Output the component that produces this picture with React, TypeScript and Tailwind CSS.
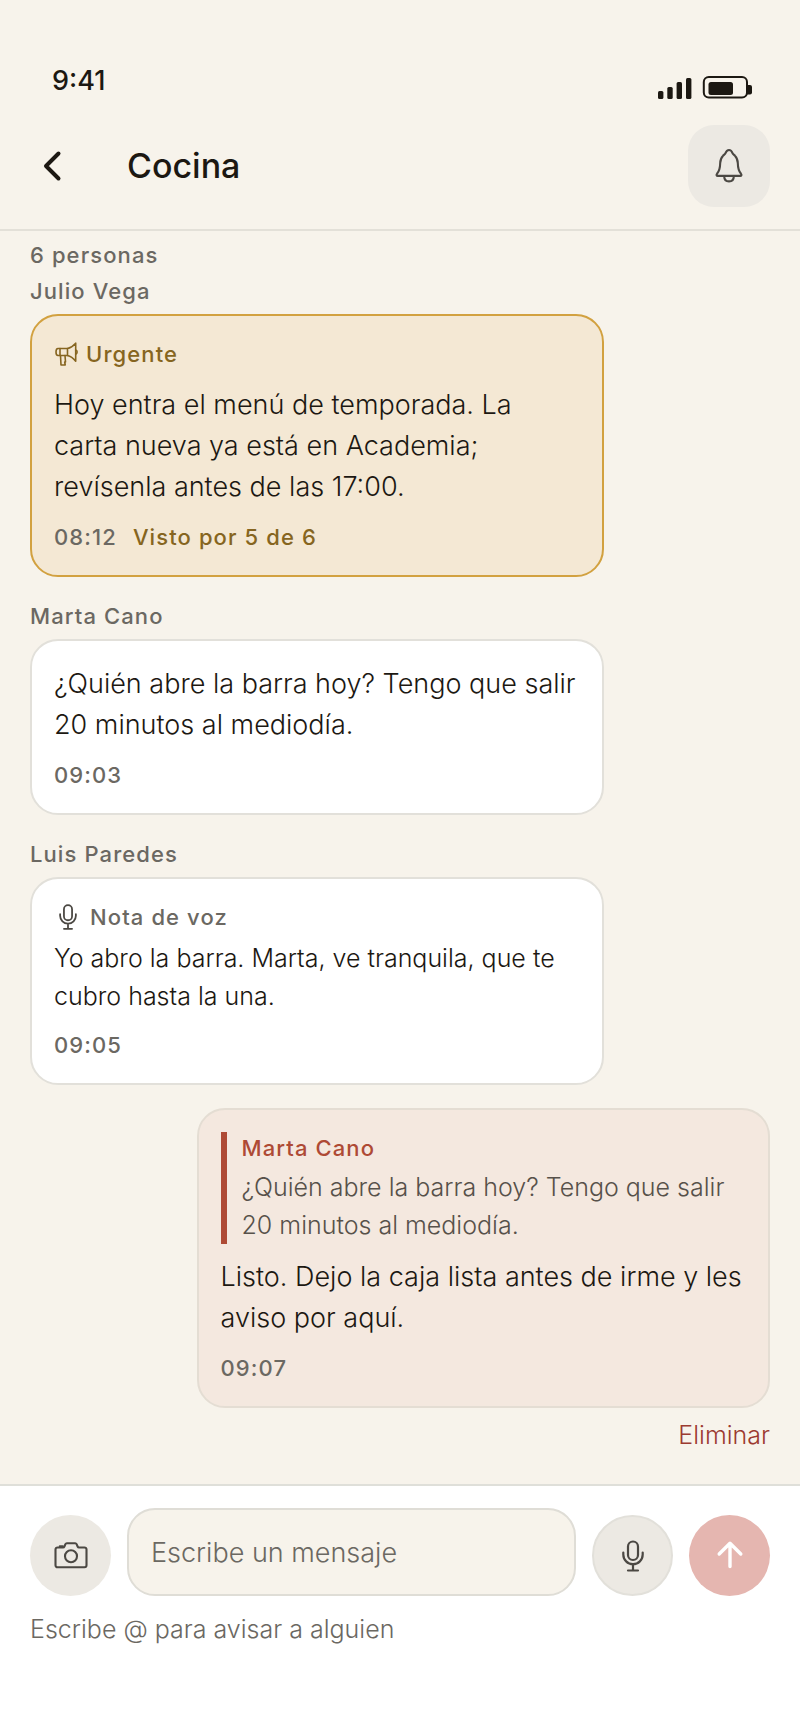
import { useState } from "react";
import type { ReactNode } from "react";
import clsx from "clsx";

type Message = {
  id: string;
  author?: string;
  text: string;
  time: string;
  kind?: "urgent" | "voice";
  seen?: string;
  quote?: { author: string; text: string };
};

const messages: Message[] = [
  {
    id: "m1",
    author: "Julio Vega",
    text: "Hoy entra el menú de temporada. La carta nueva ya está en Academia; revísenla antes de las 17:00.",
    time: "08:12",
    kind: "urgent",
    seen: "Visto por 5 de 6",
  },
  {
    id: "m2",
    author: "Marta Cano",
    text: "¿Quién abre la barra hoy? Tengo que salir 20 minutos al mediodía.",
    time: "09:03",
  },
  {
    id: "m3",
    author: "Luis Paredes",
    text: "Yo abro la barra. Marta, ve tranquila, que te cubro hasta la una.",
    time: "09:05",
    kind: "voice",
  },
  {
    id: "m4",
    text: "Listo. Dejo la caja lista antes de irme y les aviso por aquí.",
    time: "09:07",
    quote: {
      author: "Marta Cano",
      text: "¿Quién abre la barra hoy? Tengo que salir 20 minutos al mediodía.",
    },
  },
];

function MicIcon({ className }: { className: string }) {
  return (
    <svg className={className} viewBox="0 0 24 32" fill="none" stroke="currentColor" strokeWidth={2.2} strokeLinecap="round" aria-hidden="true">
      <rect x="7" y="1.5" width="10" height="18.5" rx="5" />
      <path d="M2.300 12.500v2a9.700 9.700 0 0 0 19.400 0v-2M12 24.500v6M7 30.500h10" />
    </svg>
  );
}

function MegaphoneIcon() {
  return (
    <svg className="w-6 h-6 shrink-0" viewBox="0 0 24 24" fill="none" stroke="currentColor" strokeWidth={1.6} strokeLinecap="round" strokeLinejoin="round" aria-hidden="true">
      <path d="M13.500 6.500H4C2.600 6.500 2 8 2 10s.6 3.500 2 3.500h9.500" />
      <path d="M6 6.500v7M13.500 6.500v7M13.500 6.500c3.200-.6 5.800-2.600 8.200-5.300v18c-2.400-3-5-5-8.200-5.700" />
      <path d="M21.700 8c1.900.7 1.900 3.400 0 4.200M6.500 13.500l.5 9.500h4.200l-.5-3h.8l-.5-6.500" />
    </svg>
  );
}

function BellIcon() {
  return (
    <svg className="w-8 h-9" viewBox="0 0 32 36" fill="none" stroke="currentColor" strokeWidth={2.1} strokeLinecap="round" strokeLinejoin="round" aria-hidden="true">
      <path d="M16 2c-1.900 0-2.800 1.200-3.500 3.200-.4 1.200-1.700 1.700-2.600 2.700-1.900 1.900-2.600 4-2.700 7.100-.1 5.500-.7 8-3.200 10.800-.9 1.200-.4 2.100.7 2.100h22.600c1.100 0 1.600-.9.700-2.100-2.500-2.800-3.100-5.300-3.200-10.800-.1-3.100-.8-5.200-2.700-7.100-.9-1-2.200-1.500-2.600-2.700C18.800 3.200 17.900 2 16 2z" />
      <path d="M11.200 28.200c0 3.400 2 5.200 4.800 5.200s4.800-1.800 4.800-5.200" />
    </svg>
  );
}

function CameraIcon() {
  return (
    <svg className="w-9 h-9" viewBox="0 0 36 36" fill="none" stroke="currentColor" strokeWidth={2.1} strokeLinecap="round" strokeLinejoin="round" aria-hidden="true">
      <path d="M4.500 9.500H10c.7 0 1.100-.3 1.400-1l1-2.300c.3-.7.800-1 1.500-1h8.200c.7 0 1.200.3 1.500 1l1 2.300c.3.700.7 1 1.400 1h5.500a2 2 0 0 1 2 2v15.800a2 2 0 0 1-2 2h-27a2 2 0 0 1-2-2V11.500a2 2 0 0 1 2-2z" />
      <path d="M6.800 8.300h3" />
      <circle cx="18" cy="18.300" r="6" />
    </svg>
  );
}

function StatusBar() {
  return (
    <div className="flex items-end justify-between pl-[52px] pr-12 pt-[62px]">
      <span className="text-[27px] leading-[37px] font-medium">9:41</span>
      <div className="flex items-end gap-[10px]">
        <svg className="w-[35px] h-6" viewBox="0 0 35 24" fill="currentColor" aria-hidden="true">
          <rect x="1" y="16" width="5.400" height="8" rx="1.500" />
          <rect x="10.300" y="12" width="5.400" height="12" rx="1.500" />
          <rect x="19.600" y="7" width="5.400" height="17" rx="1.500" />
          <rect x="29" y="3" width="5.400" height="21" rx="1.500" />
        </svg>
        <svg className="w-[50px] h-6" viewBox="0 0 50 24" fill="none" aria-hidden="true">
          <rect x="1.800" y="2" width="43.200" height="20.500" rx="5" stroke="currentColor" strokeWidth="2" />
          <rect x="6.500" y="7" width="24.500" height="13" rx="2.500" fill="currentColor" />
          <path d="M45 10h3a2 2 0 0 1 2 2v5.500a2 2 0 0 1-2 2h-3z" fill="currentColor" />
        </svg>
      </div>
    </div>
  );
}

function Label({ className, children }: { className?: string; children: ReactNode }) {
  return (
    <span className={clsx("text-[22px] leading-[32px] font-medium tracking-wider", className)}>
      {children}
    </span>
  );
}

function MessageBubble({ message }: { message: Message }) {
  const mine = !message.author;
  const urgent = message.kind === "urgent";
  const voice = message.kind === "voice";

  return (
    <article className={clsx("flex flex-col", mine ? "items-end" : "items-start")}>
      {message.author && <Label className="mb-[7px] text-[#6b6862]">{message.author}</Label>}
      <div
        className={clsx(
          "flex flex-col w-[77.5%] rounded-[28px] border-2 p-[22px]",
          urgent && "bg-[#f4e8d4] border-[#d2a140]",
          mine && "bg-[#f4e8df] border-[#e4ddd3]",
          !urgent && !mine && "bg-white border-[#e2e0da]"
        )}
      >
        {urgent && (
          <div className="flex items-center gap-2 mb-[14px] text-[#866520]">
            <MegaphoneIcon />
            <Label>Urgente</Label>
          </div>
        )}
        {voice && (
          <div className="flex items-center gap-2 mb-[6px] text-[#6b6862]">
            <MicIcon className="w-7 h-[26px] shrink-0 text-[#4b4843]" />
            <Label>Nota de voz</Label>
          </div>
        )}
        {message.quote && (
          <blockquote className="flex flex-col gap-1 mb-3 border-l-[6px] border-[#ae4a35] pl-[15px]">
            <Label className="text-[#ae4a35]">{message.quote.author}</Label>
            <p className="text-[25px] leading-[38px] font-light text-[#57514a]">{message.quote.text}</p>
          </blockquote>
        )}
        <p className={clsx("font-light", voice ? "text-[25px] leading-[38px]" : "text-[27px] leading-[41px]")}>
          {message.text}
        </p>
        <div className="flex gap-4 mt-[14px]">
          <Label className="text-[#6b6862]">{message.time}</Label>
          {message.seen && <Label className="text-[#866520]">{message.seen}</Label>}
        </div>
      </div>
      {mine && (
        <button type="button" className="mt-2 text-[25px] leading-[38px] font-light text-[#9c3a30]">
          Eliminar
        </button>
      )}
    </article>
  );
}

export default function App() {
  const [draft, setDraft] = useState("");

  return (
    <div className="min-h-screen flex flex-col bg-[#f7f3eb] text-[#1c1812] font-['Inter',sans-serif]">
      {/* Header */}
      <header className="border-b-2 border-[#e3e0d8]">
        <StatusBar />
        <div className="flex items-center px-[30px] pt-[26px] pb-[22px]">
          <button type="button" aria-label="Volver" className="w-[97px] h-[82px] flex items-center pl-3">
            <svg className="w-5 h-8" viewBox="0 0 20 32" fill="none" stroke="currentColor" strokeWidth={4} strokeLinecap="round" strokeLinejoin="round" aria-hidden="true">
              <path d="M16.500 3.500L4 16l12.500 12.500" />
            </svg>
          </button>
          <h1 className="flex-1 text-[34px] leading-[48px] font-medium">Cocina</h1>
          <button
            type="button"
            aria-label="Notificaciones"
            className="size-[82px] rounded-[26px] bg-[#ece9e3] flex items-center justify-center text-[#4b4843]"
          >
            <BellIcon />
          </button>
        </div>
      </header>

      {/* Conversation */}
      <main className="flex flex-col px-[30px] pt-2 pb-[30px]">
        <Label className="mb-1 text-[#6b6862]">6 personas</Label>
        <div className="flex flex-col gap-[23px]">
          {messages.map((m) => (
            <MessageBubble key={m.id} message={m} />
          ))}
        </div>
      </main>

      {/* Composer */}
      <form
        className="flex-1 bg-white border-t-2 border-[#dfdfd9] px-[30px] pt-[22px]"
        onSubmit={(e) => {
          e.preventDefault();
          setDraft("");
        }}
      >
        <div className="flex items-end gap-4">
          <button
            type="button"
            aria-label="Cámara"
            className="size-[81px] shrink-0 rounded-full bg-[#ece9e3] flex items-center justify-center text-[#4b4843]"
          >
            <CameraIcon />
          </button>
          <input
            type="text"
            aria-label="Escribe un mensaje"
            aria-describedby="composer-hint"
            placeholder="Escribe un mensaje"
            value={draft}
            onChange={(e) => setDraft(e.target.value)}
            className="flex-1 min-w-0 h-[88px] rounded-[28px] border-2 border-[#dfddd6] bg-[#f7f3eb] px-[22px] text-[27px] font-light placeholder:text-[#6b6862] outline-none"
          />
          <button
            type="button"
            aria-label="Nota de voz"
            className="size-[81px] shrink-0 rounded-full border-2 border-[#e2e0da] bg-[#ece9e3] flex items-center justify-center text-[#4b4843]"
          >
            <MicIcon className="w-6 h-8" />
          </button>
          <button
            type="submit"
            aria-label="Enviar"
            className="size-[81px] shrink-0 rounded-full bg-[#e5b6b0] flex items-center justify-center text-white"
          >
            <svg className="w-7 h-8" viewBox="0 0 28 32" fill="none" stroke="currentColor" strokeWidth={3.400} strokeLinecap="round" strokeLinejoin="round" aria-hidden="true">
              <path d="M14 26.500V3.500M3.200 14L14 3.200 24.800 14" />
            </svg>
          </button>
        </div>
        <p id="composer-hint" className="mt-[14px] text-[25px] leading-[38px] font-light text-[#6b6862]">
          Escribe @ para avisar a alguien
        </p>
      </form>
    </div>
  );
}
